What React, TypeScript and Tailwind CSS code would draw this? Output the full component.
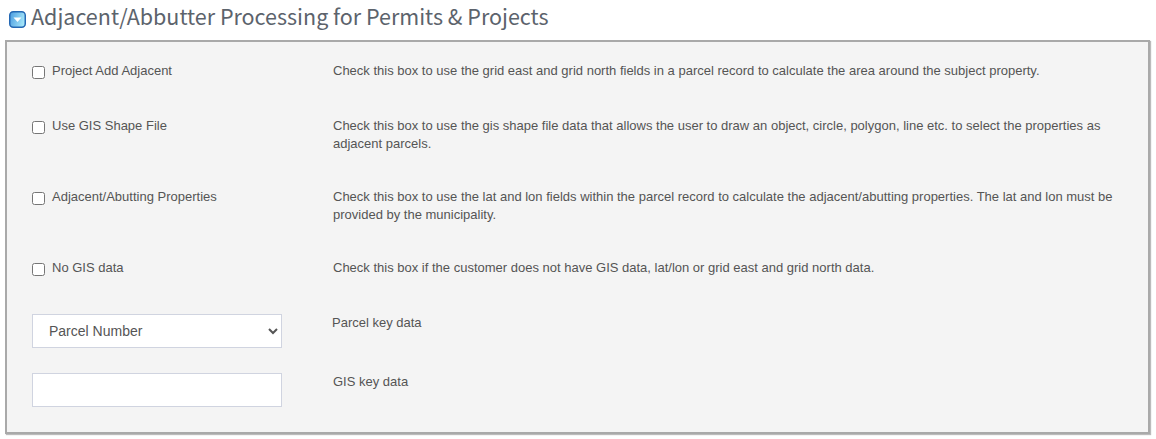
import React from "react";

const rows = [
  { label: "Project Add Adjacent", text: "Check this box to use the grid east and grid north fields in a parcel record to calculate the area around the subject property.", h: "h-[55px]" },
  { label: "Use GIS Shape File", text: "Check this box to use the gis shape file data that allows the user to draw an object, circle, polygon, line etc. to select the properties as adjacent parcels.", h: "h-[71px]" },
  { label: "Adjacent/Abutting Properties", text: "Check this box to use the lat and lon fields within the parcel record to calculate the adjacent/abutting properties. The lat and lon must be provided by the municipality.", h: "h-[71px]" },
  { label: "No GIS data", text: "Check this box if the customer does not have GIS data, lat/lon or grid east and grid north data.", h: "h-[54px]" },
];

export default function App() {
  return (
    <div className="w-[1156px] h-[439px] bg-white overflow-hidden font-['Liberation_Sans',Arial,sans-serif] text-[13px] text-[#555]">
      <div className="h-[40px] pl-[9px] pt-[2px] flex items-start gap-[5px]">
        <svg width="17" height="17" viewBox="0 0 17 17" className="mt-[9px] shrink-0">
          <defs>
            <linearGradient id="g" x1="0" y1="0" x2="1" y2="0.3">
              <stop offset="0" stopColor="#4a9be0" />
              <stop offset="1" stopColor="#a2e4f8" />
            </linearGradient>
          </defs>
          <rect x="0.75" y="0.75" width="15.5" height="15.5" rx="3.5" fill="url(#g)" stroke="#2468b4" strokeWidth="1.5" />
          <path d="M4.5 6.5h8L8.5 11z" fill="#fff" />
        </svg>
        <h1 className="font-['Noto_Sans_CJK_SC',sans-serif] text-[21.5px] leading-[30px] -mt-[1px] text-[#5c636c] font-normal whitespace-nowrap">
          Adjacent/Abbutter Processing for Permits &amp; Projects
        </h1>
      </div>
      <div className="ml-[5px] w-[1145px] h-[394px] border-2 border-[#a9a9a9] bg-[#f4f4f4] pl-[25px] pt-[21px] shadow-[1px_1px_1px_#bbb]">
        {rows.map((r) => (
          <div key={r.label} className={`flex ${r.h}`}>
            <label className="w-[301px] shrink-0 flex items-start">
              <input type="checkbox" className="appearance-auto w-[13px] h-[13px] mt-[3px] mr-[7px] shrink-0" />
              <span className="leading-[16px]">{r.label}</span>
            </label>
            <p className="w-[790px] leading-[18px] -mt-[1px]">{r.text}</p>
          </div>
        ))}
        <div className="flex h-[59px]">
          <div className="w-[300px] shrink-0">
            <select defaultValue="Parcel Number" className="appearance-auto w-[250px] h-[34px] bg-white border border-[#d0d4e0] pl-[12px] text-[14px] text-[#555] outline-none">
              <option>Parcel Number</option>
            </select>
          </div>
          <p className="leading-[18px]">Parcel key data</p>
        </div>
        <div className="flex">
          <div className="w-[301px] shrink-0">
            <input type="text" className="block w-[250px] h-[34px] bg-white border border-[#d0d4e0] outline-none" />
          </div>
          <p className="leading-[18px]">GIS key data</p>
        </div>
      </div>
    </div>
  );
}
